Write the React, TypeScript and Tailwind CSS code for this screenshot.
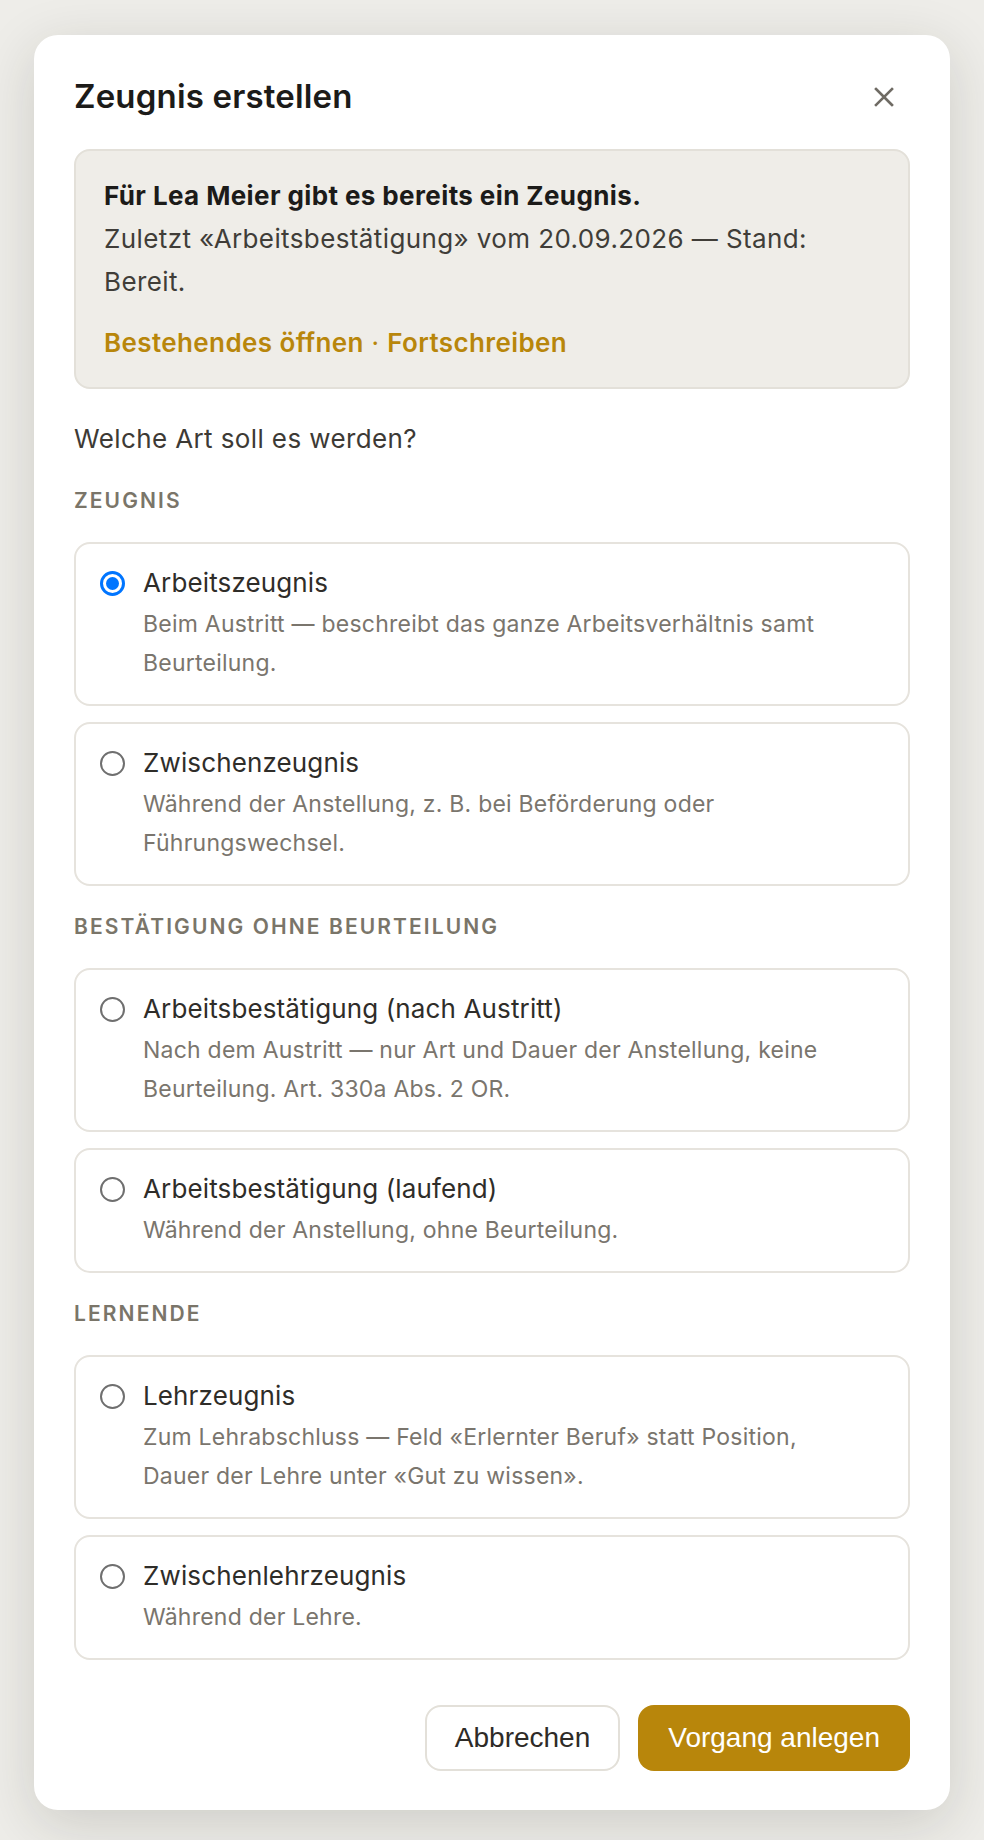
import React from "react";

type Option = {
  title: string;
  desc: string;
  checked?: boolean;
};

const sections: { label: string; options: Option[] }[] = [
  {
    label: "Zeugnis",
    options: [
      {
        title: "Arbeitszeugnis",
        desc: "Beim Austritt — beschreibt das ganze Arbeitsverhältnis samt Beurteilung.",
        checked: true,
      },
      {
        title: "Zwischenzeugnis",
        desc: "Während der Anstellung, z. B. bei Beförderung oder Führungswechsel.",
      },
    ],
  },
  {
    label: "Bestätigung ohne Beurteilung",
    options: [
      {
        title: "Arbeitsbestätigung (nach Austritt)",
        desc: "Nach dem Austritt — nur Art und Dauer der Anstellung, keine Beurteilung. Art. 330a Abs. 2 OR.",
      },
      {
        title: "Arbeitsbestätigung (laufend)",
        desc: "Während der Anstellung, ohne Beurteilung.",
      },
    ],
  },
  {
    label: "Lernende",
    options: [
      {
        title: "Lehrzeugnis",
        desc: "Zum Lehrabschluss — Feld «Erlernter Beruf» statt Position, Dauer der Lehre unter «Gut zu wissen».",
      },
      {
        title: "Zwischenlehrzeugnis",
        desc: "Während der Lehre.",
      },
    ],
  },
];

function Radio({ checked }: { checked?: boolean }) {
  if (checked) {
    return (
      <span className="mt-[6px] flex h-[25px] w-[25px] shrink-0 items-center justify-center rounded-full border-[3px] border-[#0075ff] bg-white">
        <span className="h-[13px] w-[13px] rounded-full bg-[#0075ff]" />
      </span>
    );
  }
  return <span className="mt-[6px] h-[25px] w-[25px] shrink-0 rounded-full border-2 border-[#6f6f6f] bg-white" />;
}

function OptionCard({ option }: { option: Option }) {
  return (
    <label className="flex gap-[18px] rounded-[16px] border-2 border-[#e6e3dd] bg-white px-6 py-[21px]">
      <Radio checked={option.checked} />
      <div className="flex flex-col pr-4">
        <span className="text-[26px] leading-[36px] tracking-[0.005em] text-[#2f2d29]">{option.title}</span>
        <span className="mt-1 text-[23px] leading-[39px] tracking-[0.01em] text-[#7a756d]">{option.desc}</span>
      </div>
    </label>
  );
}

export default function App() {
  return (
    <div
      className="min-h-screen bg-[#eeede9] px-[34px] pt-[35px] pb-[34px]"
      style={{ fontFamily: "Inter, 'Noto Sans', sans-serif" }}
    >
      <div className="rounded-[24px] bg-white px-10 pt-10 pb-[39px] shadow-[0_14px_56px_rgba(40,35,25,0.16)]">
        <div className="flex h-[44px] items-center justify-between">
          <h1 className="text-[33px] font-semibold tracking-[0.005em] text-[#1c1b19]">Zeugnis erstellen</h1>
          <button className="mr-[16px] text-[#6f6b64]" aria-label="Schliessen">
            <svg width="20" height="20" viewBox="0 0 20 20" fill="none" stroke="currentColor" strokeWidth="2.6" strokeLinecap="square">
              <path d="M2 2 L18 18 M18 2 L2 18" />
            </svg>
          </button>
        </div>

        <div className="mt-[30px] rounded-[16px] border-2 border-[#e3e0d9] bg-[#efede8] px-7 pt-[23px] pb-[23px]">
          <p className="text-[26px] leading-[43px] tracking-[0.015em] text-[#403d38]">
            <span className="font-bold text-[#1c1b19]">Für Lea Meier gibt es bereits ein Zeugnis.</span>
            <br />
            Zuletzt «Arbeitsbestätigung» vom 20.09.2026 — Stand: Bereit.
          </p>
          <p className="mt-[18px] text-[26px] leading-[43px] font-semibold tracking-[0.015em] text-[#b8860b]">
            <a href="#">Bestehendes öffnen</a>
            <span className="font-normal"> · </span>
            <a href="#">Fortschreiben</a>
          </p>
        </div>

        <p className="mt-[28px] text-[26px] leading-[43px] tracking-[0.015em] text-[#3d3a35]">Welche Art soll es werden?</p>

        {sections.map((section) => (
          <div key={section.label} className="mt-[27px]">
            <div className="text-[21px] leading-[28px] font-semibold tracking-[0.1em] text-[#7a7569] uppercase">
              {section.label}
            </div>
            <div className="mt-[27px] flex flex-col gap-4">
              {section.options.map((option) => (
                <OptionCard key={option.title} option={option} />
              ))}
            </div>
          </div>
        ))}

        <div className="mt-[45px] flex justify-end gap-[18px]" style={{ fontFamily: "'Liberation Sans', Arial, sans-serif" }}>
          <button className="h-[66px] rounded-[16px] border-2 border-[#e3e0d9] bg-white px-[28px] text-[28px] text-[#2e2b27]">
            Abbrechen
          </button>
          <button className="h-[66px] rounded-[16px] bg-[#b8860b] px-[30px] text-[28px] text-white">
            Vorgang anlegen
          </button>
        </div>
      </div>
    </div>
  );
}
